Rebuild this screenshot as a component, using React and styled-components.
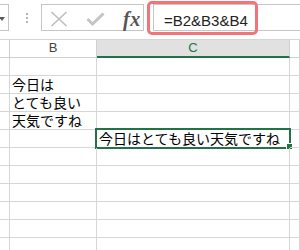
import React from 'react';
import styled, { createGlobalStyle } from 'styled-components';

const Global = createGlobalStyle`
  html, body { margin: 0; padding: 0; background: #ffffff; }
  body {
    width: 300px;
    height: 250px;
    overflow: hidden;
    font-family: "Liberation Sans", "Noto Sans CJK JP", sans-serif;
  }
`;

const Page = styled.div`
  width: 300px;
  height: 250px;
  overflow: hidden;
  display: flex;
  flex-direction: column;
  background: #fff;
`;

const FormulaBar = styled.div`
  position: relative;
  flex: none;
  height: 40px;
  box-sizing: border-box;
  padding-top: 4px;
  display: flex;
  align-items: flex-start;
  border-bottom: 1px solid #d6d6d6;
`;

const NameBox = styled.div`
  flex: none;
  margin-left: -50px;
  width: 59px;
  height: 27px;
  box-sizing: border-box;
  border: 1px solid #c6c6c6;
  display: flex;
  align-items: center;
  justify-content: flex-end;
  padding-right: 3px;
`;

const Arrow = styled.span`
  width: 0;
  height: 0;
  border-left: 3px solid transparent;
  border-right: 3px solid transparent;
  border-top: 4px solid #5a5a5a;
  margin-top: 2px;
`;

const Grip = styled.div`
  flex: none;
  margin-left: 17px;
  margin-top: 9px;
  display: flex;
  flex-direction: column;
  gap: 2px;
`;

const GripDot = styled.span`
  width: 2px;
  height: 2px;
  background: #b5b5b5;
`;

const ToolBox = styled.div`
  flex: none;
  margin-left: 13px;
  width: 103px;
  height: 27px;
  box-sizing: border-box;
  border: 1px solid #c6c6c6;
  display: flex;
  align-items: center;
  padding: 2px 0 0 8px;
  gap: 18px;
`;

const Fx = styled.span`
  font-family: "Liberation Serif", serif;
  font-style: italic;
  font-weight: 700;
  font-size: 20px;
  line-height: 20px;
  color: #555555;
  letter-spacing: 0.5px;
`;

const Input = styled.div`
  flex: 1;
  margin-left: 9px;
  margin-right: -6px;
  height: 27px;
  box-sizing: border-box;
  border: 1px solid #c6c6c6;
  display: flex;
  align-items: flex-end;
  padding: 0 0 1px 10px;
`;

const FormulaText = styled.span`
  font-family: "Liberation Sans", sans-serif;
  font-size: 15px;
  line-height: 16px;
  color: #222;
`;

const Callout = styled.div`
  position: absolute;
  left: 147px;
  top: 1px;
  width: 111px;
  height: 34px;
  box-sizing: border-box;
  border: 3px solid #f27478;
  border-radius: 5px;
  pointer-events: none;
`;

const Sheet = styled.div`
  display: grid;
  grid-template-columns: 10px 87px 193px 1fr;
  grid-auto-rows: 18px;
`;

const HeaderCell = styled.div`
  box-sizing: border-box;
  height: 18px;
  border-right: 1px solid #d0d0d0;
  border-bottom: ${p => (p.$active ? '2px solid #217346' : '1px solid #d0d0d0')};
  background: ${p => (p.$active ? '#e1e1e1' : '#ffffff')};
  color: ${p => (p.$active ? '#217346' : '#444444')};
  font-family: "Liberation Sans", sans-serif;
  font-size: 13px;
  line-height: 16px;
  text-align: center;
`;

const Cell = styled.div`
  position: relative;
  box-sizing: border-box;
  height: 18px;
  border-right: 1px solid #d6d6d6;
  border-bottom: 1px solid #d6d6d6;
  padding-left: 2px;
  font-family: "Noto Sans CJK JP", sans-serif;
  font-size: 14px;
  line-height: 17px;
  color: #000;
  white-space: nowrap;
`;

const Selection = styled.div`
  position: absolute;
  left: -2px;
  top: -2px;
  right: -2px;
  bottom: -2px;
  border: 2px solid #217346;
  pointer-events: none;
`;

const FillHandle = styled.span`
  position: absolute;
  right: -4px;
  bottom: -3px;
  width: 5px;
  height: 5px;
  background: #217346;
  border: 1px solid #ffffff;
`;

const CrossIcon = () => (
  <svg width="18" height="16" viewBox="0 0 18 16">
    <path d="M1.5 1 L16.5 15 M16.5 1 L1.5 15" stroke="#bdbdbd" strokeWidth="1.6" fill="none" />
  </svg>
);

const CheckIcon = () => (
  <svg width="19" height="14" viewBox="0 0 19 14">
    <path d="M1.5 7 L6.5 12 L17.5 1.5" stroke="#c4c4c4" strokeWidth="3" fill="none" strokeLinejoin="miter" />
  </svg>
);

const rowsB = ['', '今日は', 'とても良い', '天気ですね', '', '', '', '', '', '', ''];
const rowsC = ['', '', '', '', '今日はとても良い天気ですね', '', '', '', '', '', ''];

export default function App() {
  return (
    <Page>
      <Global />
      <FormulaBar>
        <NameBox>
          <Arrow />
        </NameBox>
        <Grip>
          <GripDot />
          <GripDot />
          <GripDot />
        </Grip>
        <ToolBox>
          <CrossIcon />
          <CheckIcon />
          <Fx>fx</Fx>
        </ToolBox>
        <Input>
          <FormulaText>=B2&amp;B3&amp;B4</FormulaText>
        </Input>
        <Callout />
      </FormulaBar>
      <Sheet>
        <HeaderCell />
        <HeaderCell>B</HeaderCell>
        <HeaderCell $active>C</HeaderCell>
        <HeaderCell />
        {rowsB.map((b, i) => (
          <React.Fragment key={i}>
            <Cell />
            <Cell>{b}</Cell>
            <Cell>
              {rowsC[i]}
              {i === 4 && (
                <Selection>
                  <FillHandle />
                </Selection>
              )}
            </Cell>
            <Cell />
          </React.Fragment>
        ))}
      </Sheet>
    </Page>
  );
}
